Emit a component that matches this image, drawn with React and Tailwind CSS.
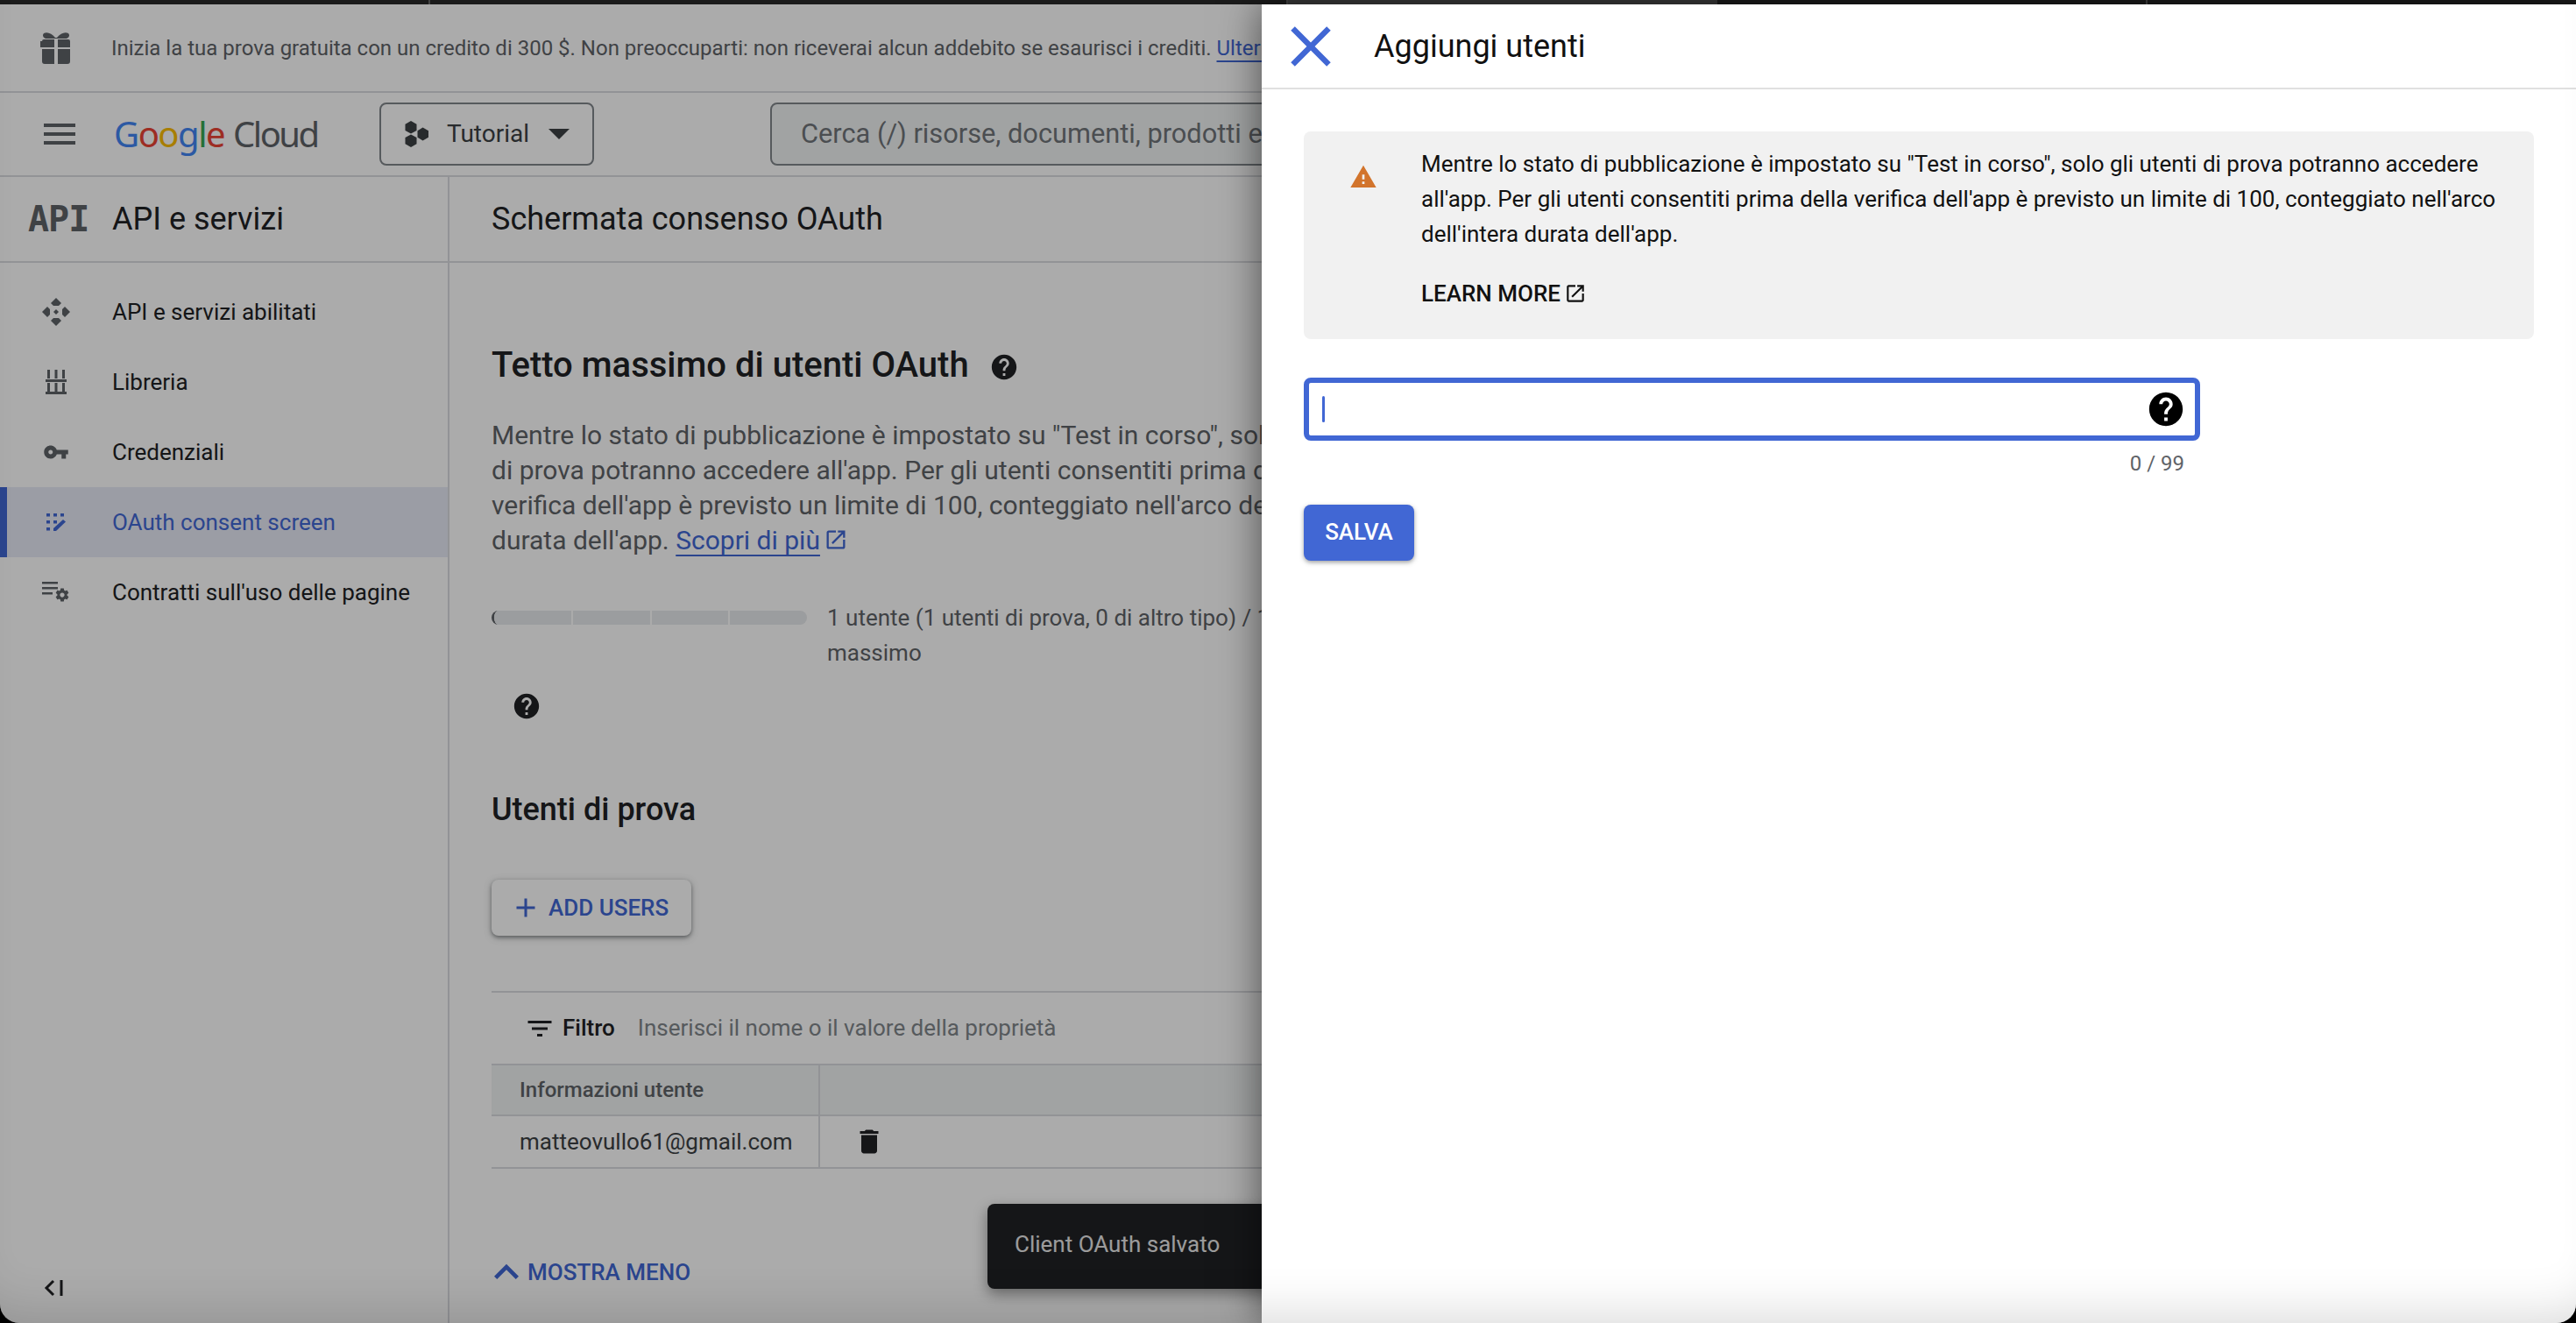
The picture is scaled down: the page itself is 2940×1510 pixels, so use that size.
const Icon = ({ d, className = "" }) => (
  <svg viewBox="0 0 24 24" fill="currentColor" className={className}>
    <path d={d} />
  </svg>
);

const icons = {
  help: "M12 2C6.48 2 2 6.48 2 12s4.48 10 10 10 10-4.48 10-10S17.52 2 12 2zm1 17h-2v-2h2v2zm2.07-7.75l-.9.92C13.45 12.9 13 13.5 13 15h-2v-.5c0-1.1.45-2.1 1.17-2.83l1.24-1.26c.37-.36.59-.86.59-1.41 0-1.1-.9-2-2-2s-2 .9-2 2H8c0-2.21 1.79-4 4-4s4 1.79 4 4c0 .88-.36 1.68-.93 2.25z",
  trash: "M6 19c0 1.1.9 2 2 2h8c1.1 0 2-.9 2-2V7H6v12zM19 4h-3.5l-1-1h-5l-1 1H5v2h14V4z",
  filter: "M10 18h4v-2h-4v2zM3 6v2h18V6H3zm3 7h12v-2H6v2z",
  key: "M12.65 10C11.83 7.67 9.61 6 7 6c-3.31 0-6 2.69-6 6s2.69 6 6 6c2.61 0 4.83-1.67 5.65-4H17v4h4v-4h2v-4H12.65zM7 14c-1.1 0-2-.9-2-2s.9-2 2-2 2 .9 2 2-.9 2-2 2z",
  warning: "M1 21h22L12 2 1 21zm12-3h-2v-2h2v2zm0-4h-2v-4h2v4z",
  external: "M19 19H5V5h7V3H5c-1.11 0-2 .9-2 2v14c0 1.1.89 2 2 2h14c1.1 0 2-.9 2-2v-7h-2v7zM14 3v2h3.59l-9.83 9.83 1.41 1.41L19 6.41V10h2V3h-7z",
  close: "M19 6.41L17.59 5 12 10.59 6.41 5 5 6.41 10.59 12 5 17.59 6.41 19 12 13.41 17.59 19 19 17.59 13.41 12z",
  add: "M19 13h-6v6h-2v-6H5v-2h6V5h2v6h6v2z",
  less: "M12 8l-6 6 1.41 1.41L12 10.83l4.59 4.58L18 14z",
  gear: "M19.43 12.98c.04-.32.07-.64.07-.98s-.03-.66-.07-.98l2.11-1.65c.19-.15.24-.42.12-.64l-2-3.46c-.12-.22-.39-.3-.61-.22l-2.49 1c-.52-.4-1.08-.73-1.69-.98l-.38-2.65C14.46 2.18 14.25 2 14 2h-4c-.25 0-.46.18-.49.42l-.38 2.65c-.61.25-1.17.59-1.69.98l-2.49-1c-.23-.09-.49 0-.61.22l-2 3.46c-.13.22-.07.49.12.64l2.11 1.65c-.04.32-.07.65-.07.98s.03.66.07.98l-2.11 1.65c-.19.15-.24.42-.12.64l2 3.46c.12.22.39.3.61.22l2.49-1c.52.4 1.08.73 1.69.98l.38 2.65c.03.24.24.42.49.42h4c.25 0 .46-.18.49-.42l.38-2.65c.61-.25 1.17-.59 1.69-.98l2.49 1c.23.09.49 0 .61-.22l2-3.46c.12-.22.07-.49-.12-.64l-2.11-1.65zM12 15.5c-1.93 0-3.5-1.57-3.5-3.5s1.57-3.5 3.5-3.5 3.5 1.57 3.5 3.5-1.57 3.5-3.5 3.5z",
};

const Gift = () => (
  <svg viewBox="0 0 36 36" fill="currentColor" className="w-[36px] h-[36px] text-[#5f6368]">
    <path d="M4 1c4-2 9 0 13 5h2c4-5 9-7 13-5 2 2 1 5-2 6H6C3 6 2 3 4 1z" />
    <path d="M2 9a2 2 0 012-2h12v9H0V9zM20 7h12a2 2 0 012 2v7H20V7z" transform="translate(0 1)" />
    <path d="M2 19h14v17H5a3 3 0 01-3-3V19zM20 19h14v14a3 3 0 01-3 3H20V19z" />
  </svg>
);

const Hexes = () => (
  <svg viewBox="0 0 28 30" fill="currentColor" className="w-[28px] h-[30px] text-[#3c4043]">
    <polygon points="7,0 13.5,3.8 13.5,11 7,14.6 0.5,11 0.5,3.8" />
    <polygon points="7,15.4 13.5,19 13.5,26.2 7,30 0.5,26.2 0.5,19" />
    <polygon points="20.5,7.6 27,11.3 27,18.7 20.5,22.4 14.5,18.7 14.5,11.3" />
  </svg>
);

const EnabledApis = () => (
  <svg viewBox="0 0 32 32" fill="currentColor" className="w-[32px] h-[32px]">
    <polygon points="16,0 22,6 19,9 13,9 10,6" />
    <polygon points="16,32 22,26 19,23 13,23 10,26" />
    <polygon points="0,16 6,10 9,13 9,19 6,22" />
    <polygon points="32,16 26,10 23,13 23,19 26,22" />
    <polygon points="16,13 19,16 16,19 13,16" />
  </svg>
);

const Library = () => (
  <svg viewBox="0 0 24 28" fill="currentColor" className="w-[24px] h-[28px]">
    <rect x="2" y="0" width="3" height="10" />
    <rect x="10.5" y="0" width="3" height="10" />
    <rect x="19" y="0" width="3" height="10" />
    <rect x="0" y="11" width="24" height="3" />
    <rect x="2" y="15" width="3" height="10" />
    <rect x="10.5" y="15" width="3" height="10" />
    <rect x="19" y="15" width="3" height="10" />
    <rect x="0" y="25" width="24" height="3" />
  </svg>
);

const Consent = () => (
  <svg viewBox="0 0 22 20" fill="currentColor" className="w-[22px] h-[20px]">
    <rect x="0" y="0" width="4" height="3.5" />
    <rect x="8" y="0" width="4" height="3.5" />
    <rect x="16" y="0" width="4" height="3.5" />
    <rect x="0" y="8" width="4" height="3.5" />
    <rect x="8" y="8" width="4" height="3.5" />
    <rect x="0" y="16" width="4" height="3.5" />
    <polygon points="8,17 19,7 22,9.5 11,20 8,20" />
  </svg>
);

const Contracts = () => (
  <svg viewBox="0 0 32 24" fill="currentColor" className="w-[32px] h-[24px]">
    <rect x="0" y="0" width="18" height="2.5" />
    <rect x="0" y="6" width="18" height="2.5" />
    <rect x="0" y="12" width="12" height="2.5" />
    <svg x="14" y="6" width="18" height="18" viewBox="0 0 24 24">
      <path d={icons.gear} />
    </svg>
  </svg>
);

const navItems = [
  { label: "API e servizi abilitati", icon: <EnabledApis /> },
  { label: "Libreria", icon: <Library /> },
  { label: "Credenziali", icon: <Icon d={icons.key} className="w-[30px] h-[30px]" /> },
  { label: "OAuth consent screen", icon: <Consent />, active: true },
  { label: "Contratti sull'uso delle pagine", icon: <Contracts /> },
];

const tabs = [
  "w-[491px] bg-[#1b1b1b] border-r-2 border-[#444]",
  "w-[490px] bg-[#1b1b1b]",
  "w-[489px] bg-[#1b1b1b] border-r-2 border-[#444]",
  "w-[490px] bg-[#3a3a3a]",
  "w-[491px] bg-[#1b1b1b] border-r-2 border-[#444]",
  "flex-1 bg-[#1b1b1b]",
];

function Sidebar() {
  return (
    <aside className="w-[513px] shrink-0 border-r-2 border-[#dadce0] flex flex-col">
      <div className="h-[98px] shrink-0 border-b-2 border-[#dadce0] flex items-center">
        <span className="w-[128px] pl-[32px] text-[#5f6368] text-[40px] leading-none font-bold tracking-[-1px] font-['DejaVu_Sans_Mono',monospace]">API</span>
        <span className="text-[36px] text-[#202124]">API e servizi</span>
      </div>
      <nav className="pt-[16px]">
        {navItems.map((item) => (
          <div
            key={item.label}
            className={
              item.active
                ? "h-[80px] flex items-center border-l-[8px] border-[#4167d4] bg-[#e8eaf6] text-[#4167d4]"
                : "h-[80px] flex items-center border-l-[8px] border-transparent text-[#202124]"
            }
          >
            <span className={item.active ? "w-[120px] pl-[8px] pr-[16px] flex justify-center text-[#4167d4]" : "w-[120px] pl-[8px] pr-[16px] flex justify-center text-[#5f6368]"}>
              {item.icon}
            </span>
            <span className="text-[26px]">{item.label}</span>
          </div>
        ))}
      </nav>
      <div className="mt-auto pl-[50px] pb-[30px] flex items-center text-[#202124]">
        <svg viewBox="0 0 24 20" fill="none" stroke="currentColor" strokeWidth="3" className="w-[24px] h-[20px]">
          <path d="M11 2L3 10l8 8" />
          <path d="M20 1v18" />
        </svg>
      </div>
    </aside>
  );
}

function Main() {
  return (
    <main className="flex-1 min-w-0 overflow-hidden relative">
      <div className="h-[98px] border-b-2 border-[#dadce0] flex items-center pl-[48px] text-[36px] text-[#202124]">
        Schermata consenso OAuth
      </div>
      <div className="pl-[48px] w-[1500px]">
        <div className="mt-[92px] flex items-center h-[50px]">
          <h1 className="text-[40px] font-medium text-[#202124]">Tetto massimo di utenti OAuth</h1>
          <Icon d={icons.help} className="ml-[23px] mt-[4px] w-[34px] h-[34px] text-[#202124]" />
        </div>
        <p className="mt-[35px] whitespace-nowrap text-[30px] leading-[40px] text-[#5f6368]">
          Mentre lo stato di pubblicazione è impostato su "Test in corso", solo gli utenti
          <br />
          di prova potranno accedere all'app. Per gli utenti consentiti prima della
          <br />
          verifica dell'app è previsto un limite di 100, conteggiato nell'arco dell'intera
          <br />
          durata dell'app.{" "}
          <a className="text-[#4167d4] underline underline-offset-[6px] decoration-2">Scopri di più</a>
          <Icon d={icons.external} className="inline-block ml-[4px] w-[28px] h-[28px] text-[#4167d4] align-[-3px]" />
        </p>
        <div className="mt-[48px] flex items-start">
          <div className="mt-[12px] w-[360px] h-[16px] rounded-[8px] grid grid-cols-4 gap-[2px] overflow-hidden bg-[#ffffff] border-l-[3px] border-[#5f6368]">
            <div className="bg-[#e8eaed]" />
            <div className="bg-[#e8eaed]" />
            <div className="bg-[#e8eaed]" />
            <div className="bg-[#e8eaed]" />
          </div>
          <p className="ml-[23px] text-[26px] leading-[40px] text-[#5f6368]">
            1 utente (1 utenti di prova, 0 di altro tipo) / 100 utenti di prova
            <br />
            massimo
          </p>
        </div>
        <Icon d={icons.help} className="mt-[24px] ml-[23px] w-[34px] h-[34px] text-[#202124]" />
        <h2 className="mt-[79px] text-[36px] leading-[44px] font-medium text-[#202124]">Utenti di prova</h2>
        <button className="mt-[58px] h-[64px] w-[228px] rounded-[8px] bg-white flex items-center pl-[25px] gap-[8px] text-[26px] font-medium text-[#4167d4] shadow-[0_2px_4px_rgba(60,64,67,0.5),0_2px_10px_rgba(60,64,67,0.25)]">
          <Icon d={icons.add} className="w-[36px] h-[36px] -ml-[4px]" />
          ADD USERS
        </button>
        <div className="mt-[63px] h-[83px] border-t-2 border-[#dadce0] flex items-center pl-[37px]">
          <Icon d={icons.filter} className="w-[36px] h-[36px] text-[#202124]" />
          <span className="ml-[8px] text-[26px] font-medium text-[#202124]">Filtro</span>
          <span className="ml-[26px] text-[26px] text-[#80868b]">Inserisci il nome o il valore della proprietà</span>
        </div>
        <div className="border-t-2 border-[#dadce0] h-[60px] flex bg-[#f1f3f4] border-b-2">
          <div className="w-[375px] pl-[32px] border-r-2 border-[#dadce0] flex items-center text-[24px] font-medium text-[#5f6368]">Informazioni utente</div>
        </div>
        <div className="h-[60px] flex border-b-2 border-[#dadce0]">
          <div className="w-[375px] pl-[32px] border-r-2 border-[#dadce0] flex items-center text-[26px] text-[#3c4043]">matteovullo61@gmail.com</div>
          <div className="pl-[38px] flex items-center">
            <Icon d={icons.trash} className="w-[36px] h-[36px] text-[#202124]" />
          </div>
        </div>
        <button className="mt-[96px] h-[44px] flex items-center text-[26px] font-medium text-[#4167d4]">
          <Icon d={icons.less} className="w-[56px] h-[56px] -ml-[11px] -mr-[4px]" />
          MOSTRA MENO
        </button>
      </div>
      <div className="absolute top-[1172px] left-[614px] w-[420px] h-[97px] rounded-[8px] bg-[#202124] text-white/90 text-[26px] flex items-center pl-[31px] pb-[4px] shadow-[0_6px_16px_rgba(0,0,0,0.4)]">
        Client OAuth salvato
      </div>
    </main>
  );
}

function AddUsersPanel() {
  return (
    <section className="absolute top-[5px] bottom-0 right-0 w-[1500px] bg-white text-[#111] shadow-[0_0_44px_rgba(0,0,0,0.55)] flex flex-col">
      <header className="h-[97px] shrink-0 border-b-2 border-[#e0e0e0] flex items-center">
        <Icon d={icons.close} className="ml-[17px] w-[78px] h-[78px] text-[#4167d4]" />
        <h2 className="ml-[33px] text-[36px] text-[#111]">Aggiungi utenti</h2>
      </header>
      <div className="pt-[48px] px-[48px]">
        <div className="h-[237px] rounded-[8px] bg-[#f1f1f1] flex">
          <div className="w-[134px] shrink-0 pt-[36px] pl-[52px]">
            <Icon d={icons.warning} className="w-[32px] h-[32px] text-[#d2742c]" />
          </div>
          <div className="pt-[17px] pr-[40px]">
            <p className="text-[26px] leading-[40px] text-[#111]">
              Mentre lo stato di pubblicazione è impostato su "Test in corso", solo gli utenti di prova potranno accedere all'app. Per gli utenti consentiti prima della verifica dell'app è previsto un limite di 100, conteggiato nell'arco dell'intera durata dell'app.
            </p>
            <div className="mt-[28px] flex items-center text-[26px] leading-[40px] font-medium text-[#111]">
              LEARN MORE
              <Icon d={icons.external} className="ml-[4px] w-[26px] h-[26px]" />
            </div>
          </div>
        </div>
        <div className="mt-[44px] w-[1023px] h-[72px] rounded-[8px] border-[6px] border-[#4167d4] flex items-center justify-between pl-[15px] pr-[10px]">
          <span className="w-[3px] h-[30px] bg-[#4167d4] rounded-sm" />
          <Icon d={icons.help} className="w-[46px] h-[46px] text-black" />
        </div>
        <div className="w-[1005px] mt-[8px] text-right text-[24px] leading-[36px] text-[#5f6368]">0 / 99</div>
        <button className="mt-[29px] w-[126px] h-[64px] rounded-[8px] bg-[#4167d4] text-white text-[26px] font-medium pb-[2px] shadow-[0_2px_5px_rgba(60,64,67,0.5)]">
          SALVA
        </button>
      </div>
    </section>
  );
}

export default function App() {
  return (
    <div className="h-screen w-full bg-black overflow-hidden font-['Roboto',sans-serif]">
      <div className="relative h-full rounded-b-[22px] overflow-hidden flex flex-col bg-white">
        <div className="h-[5px] shrink-0 flex">
          {tabs.map((t) => (
            <div key={t} className={t} />
          ))}
        </div>

        <div className="h-[101px] shrink-0 border-b-2 border-[#dadce0] flex items-center pl-[46px] bg-white whitespace-nowrap overflow-hidden">
          <Gift />
          <p className="ml-[45px] text-[24px] text-[#5f6368]">
            Inizia la tua prova gratuita con un credito di 300 $. Non preoccuparti: non riceverai alcun addebito se esaurisci i crediti.{" "}
            <a className="text-[#4167d4] underline underline-offset-[6px] decoration-2">Ulteriori informazioni</a>
          </p>
        </div>

        <div className="h-[96px] shrink-0 border-b-2 border-[#dadce0] flex items-center">
          <svg viewBox="0 0 36 24" fill="currentColor" className="ml-[50px] w-[36px] h-[24px] text-[#5f6368]">
            <rect width="36" height="4" />
            <rect y="10" width="36" height="4" />
            <rect y="20" width="36" height="4" />
          </svg>
          <div className="ml-[44px] w-[303px] text-[40px] leading-none tracking-[-1.5px] font-['Noto_Sans',sans-serif]">
            <span className="text-[#4285f4]">G</span>
            <span className="text-[#ea4335]">o</span>
            <span className="text-[#fbbc04]">o</span>
            <span className="text-[#4285f4]">g</span>
            <span className="text-[#34a853]">l</span>
            <span className="text-[#ea4335]">e</span>
            <span className="ml-[10px] tracking-[-2.5px] text-[#5f6368]">Cloud</span>
          </div>
          <div className="w-[245px] h-[72px] rounded-[8px] border-2 border-[#80868b] flex items-center pl-[27px] text-[#3c4043]">
            <Hexes />
            <span className="ml-[20px] text-[28px]">Tutorial</span>
            <svg viewBox="0 0 24 12" fill="currentColor" className="ml-[22px] w-[24px] h-[12px]">
              <polygon points="0,0 24,0 12,12" />
            </svg>
          </div>
          <div className="ml-[201px] w-[1500px] h-[72px] rounded-[8px] border-2 border-[#80868b] bg-[#f1f3f4] flex items-center pl-[33px] text-[30.75px] text-[#70757a]">
            Cerca (/) risorse, documenti, prodotti e altro ancora
          </div>
        </div>

        <div className="flex-1 flex min-h-0">
          <Sidebar />
          <Main />
        </div>

        {/* scrim over the page, side panel on top */}
        <div className="absolute inset-x-0 bottom-0 top-[5px] bg-[rgba(0,0,0,0.33)]" />
        <AddUsersPanel />
        <div className="absolute inset-0 pointer-events-none rounded-b-[22px] shadow-[inset_0_-50px_60px_-44px_rgba(0,0,0,0.16)]" />
      </div>
    </div>
  );
}
